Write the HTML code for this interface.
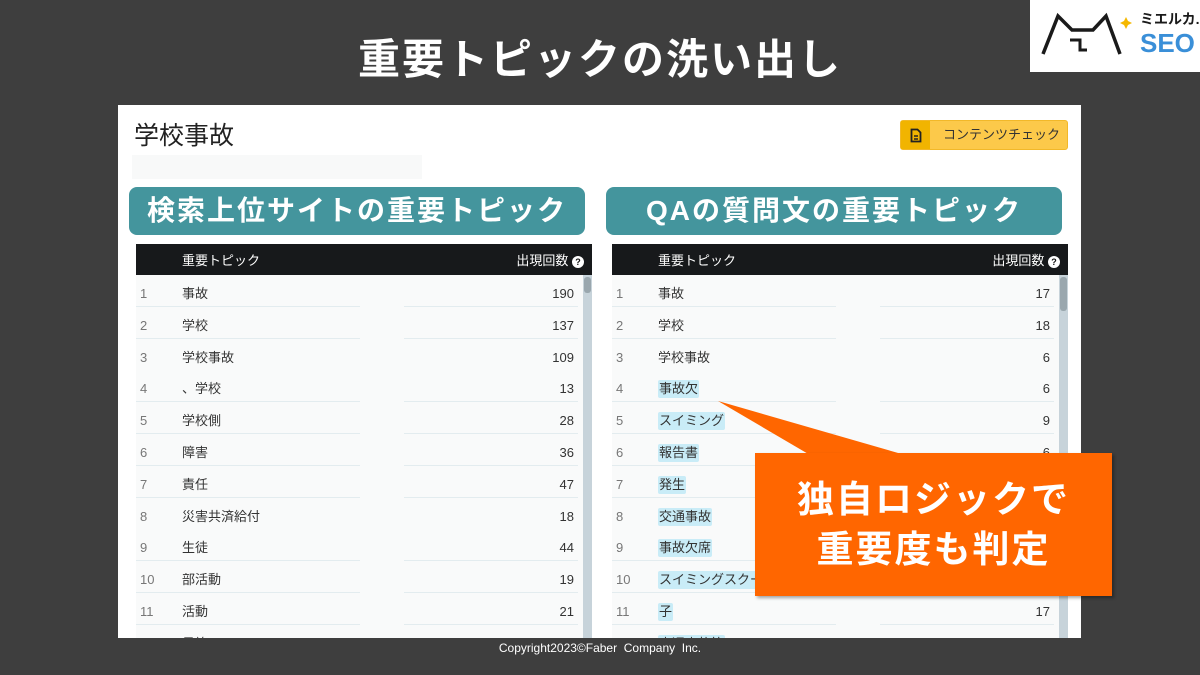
<!DOCTYPE html>
<html><head><meta charset="utf-8"><style>
*{margin:0;padding:0;box-sizing:border-box}
body{width:1200px;height:675px;background:#3e3e3e;position:relative;overflow:hidden;font-family:"Liberation Sans","Noto Sans CJK JP",sans-serif}
.a{position:absolute}
.title{left:0;width:1200px;top:30px;text-align:center;color:#fff;font-size:42px;font-weight:bold;letter-spacing:2px;line-height:60px}
.logo{left:1030px;top:0;width:170px;height:72px;background:#fff}
.panel{left:118px;top:105px;width:963px;height:533px;background:#fff;overflow:hidden}
.hd{position:absolute;height:31px;background:#17191b;color:#fff;font-size:13px;width:456px;line-height:33px}
.row{position:absolute;width:456px;height:32px;font-size:13px;color:#333;background:#f9fafa;line-height:32px}
.row .n{position:absolute;left:4px;top:3px;color:#777}
.row .t{position:absolute;left:46px;top:10px;line-height:18px}
.row .v{position:absolute;right:18px;top:3px}
.row .l1{position:absolute;left:0;width:224px;bottom:0;border-bottom:1px solid #e3ecef}
.row .l2{position:absolute;left:268px;width:174px;bottom:0;border-bottom:1px solid #e3ecef}
.hl{background:#c9ecf7;border-radius:2px;padding:0 1px}
.sb{position:absolute;width:9px;background:#c7d3da}
.tag{position:absolute;height:48px;background:#44959d;border-radius:8px;color:#fff;font-size:28px;font-weight:bold;text-align:center;line-height:48px;letter-spacing:2px}
</style></head><body>
<div class="a title">重要トピックの洗い出し</div>
<div class="a logo">
<svg width="170" height="72" style="position:absolute;left:0;top:0">
<path d="M13 54 L28 16 L42 30 L63 30 L76 16 L90 54" fill="none" stroke="#1a1a1a" stroke-width="3.5" stroke-linejoin="miter"/>
<path d="M40 40 L50 40 L50 50 L57 50" fill="none" stroke="#1a1a1a" stroke-width="3"/>
<path d="M96 17 L98 21 L102 23 L98 25 L96 29 L94 25 L90 23 L94 21Z" fill="#f5b800"/>
</svg>
<div class="a" style="left:110px;top:10px;font-size:14px;font-weight:bold;color:#1a1a1a;white-space:nowrap;line-height:18px">ミエルカ.</div>
<div class="a" style="left:110px;top:28px;font-size:26px;font-weight:bold;color:#3a8fd8;line-height:30px">SEO</div>
</div>
<div class="a panel">
<div class="a" style="left:16px;top:13px;font-size:25px;color:#222;line-height:36px">学校事故</div>
<div class="a" style="left:14px;top:50px;width:290px;height:24px;background:#f8f9f9"></div>
<div class="a" style="left:782px;top:15px;width:168px;height:30px;background:#fcc94a;border-radius:3px;border:1px solid #f2b829">
<div class="a" style="left:0;top:0;width:29px;height:28px;background:#f1b400"></div>
<svg class="a" style="left:9px;top:7px" width="12" height="15"><path d="M1.5 1.5h6l3 3v9h-9z" fill="none" stroke="#222" stroke-width="1.8"/><path d="M4 8h4M4 11h4" stroke="#222" stroke-width="1.4"/></svg>
<div class="a" style="left:42px;top:0;font-size:13px;color:#333;line-height:28px">コンテンツチェック</div>
</div>
<div class="tag" style="left:11px;top:82px;width:456px">検索上位サイトの重要トピック</div>
<div class="tag" style="left:488px;top:82px;width:456px">QAの質問文の重要トピック</div>
<div class="hd" style="left:18px;top:139px"><span class="a" style="left:46px;top:0">重要トピック</span><span class="a" style="right:8px;top:0">出現回数 <span style="display:inline-block;width:12px;height:12px;border-radius:6px;background:#fff;color:#111;font-size:9px;text-align:center;line-height:12px;font-weight:bold;vertical-align:middle">?</span></span></div>
<div class="hd" style="left:494px;top:139px"><span class="a" style="left:46px;top:0">重要トピック</span><span class="a" style="right:8px;top:0">出現回数 <span style="display:inline-block;width:12px;height:12px;border-radius:6px;background:#fff;color:#111;font-size:9px;text-align:center;line-height:12px;font-weight:bold;vertical-align:middle">?</span></span></div>
<div id="L"></div>
<div class="sb" style="left:465px;top:170px;height:370px"></div>
<div class="sb" style="left:941px;top:170px;height:370px"></div>
<div class="a" style="left:466px;top:172px;width:7px;height:16px;background:#9aa7ae;border-radius:3px"></div>
<div class="a" style="left:942px;top:172px;width:7px;height:34px;background:#9aa7ae;border-radius:3px"></div>
</div>
<svg class="a" style="left:0;top:0" width="1200" height="675"><polygon points="718,401 810,455 905,455" fill="#ff6600"/></svg>
<div class="a" style="left:755px;top:453px;width:357px;height:143px;background:#ff6600;box-shadow:2px 2px 3px rgba(0,0,0,.35);color:#fff;font-size:37px;font-weight:bold;text-align:center;line-height:50px;padding-top:22px;letter-spacing:2px">独自ロジックで<br>重要度も判定</div>
<div class="a" style="left:0;width:1200px;top:641px;text-align:center;color:#fff;font-size:12px">Copyright2023©Faber&nbsp; Company&nbsp; Inc.</div>
<script>
var L=[["事故",190],["学校",137],["学校事故",109],["、学校",13],["学校側",28],["障害",36],["責任",47],["災害共済給付",18],["生徒",44],["部活動",19],["活動",21],["最終",""]];
var R=[["事故",17],["学校",18],["学校事故",6],["事故欠",6,1],["スイミング",9,1],["報告書",6,1],["発生","",1],["交通事故","",1],["事故欠席","",1],["スイミングスクール","",1],["子",17,1],["交通事故等","",1]];
var h="";
function mk(d,x){d.forEach(function(r,i){var y=170+i*31.8;h+='<div class="row" style="left:'+x+'px;top:'+y+'px"><span class="n">'+(i+1)+'</span><span class="t'+(r[2]?' hl':'')+'">'+r[0]+'</span><span class="v">'+r[1]+'</span><div class="l1"></div><div class="l2"></div></div>';});}
mk(L,18);mk(R,494);
document.getElementById("L").outerHTML=h;
</script>
</body></html>
